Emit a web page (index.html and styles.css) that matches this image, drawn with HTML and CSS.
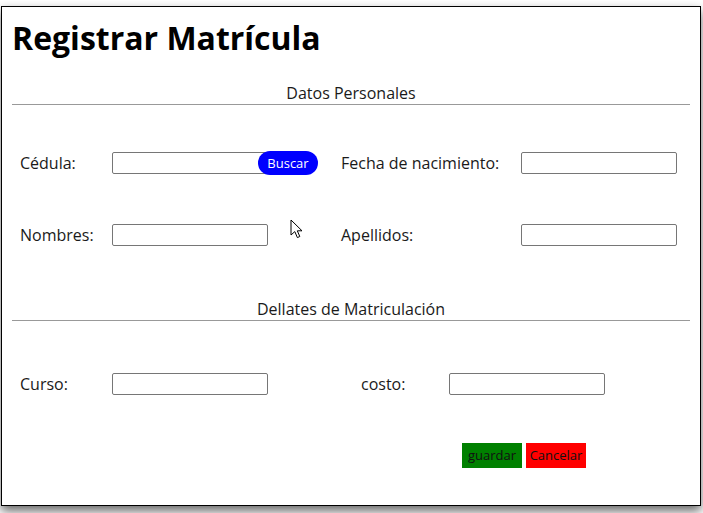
FILE: index.html
```html
<!DOCTYPE html>
<html lang="es">
<head>
<meta charset="utf-8">
<title>Registrar Matrícula</title>
<link rel="stylesheet" href="styles.css">
</head>
<body>
<div class="card">
  <h1 class="title">Registrar Matrícula</h1>

  <div class="section-title">Datos Personales</div>

  <div class="row row-a">
    <label class="lbl lbl-1">Cédula:</label>
    <div class="group group-a">
      <input class="field" type="text">
      <button class="btn-buscar" type="button">Buscar</button>
    </div>
    <label class="lbl lbl-2">Fecha de nacimiento:</label>
    <input class="field" type="text">
  </div>

  <div class="row row-a row-2">
    <label class="lbl lbl-1">Nombres:</label>
    <div class="group group-a">
      <input class="field" type="text">
    </div>
    <label class="lbl lbl-2">Apellidos:</label>
    <input class="field" type="text">
  </div>

  <div class="section-title section-2">Dellates de Matriculación</div>

  <div class="row row-3">
    <label class="lbl lbl-1">Curso:</label>
    <div class="group group-b">
      <input class="field" type="text">
    </div>
    <label class="lbl lbl-3">costo:</label>
    <input class="field" type="text">
  </div>

  <div class="actions">
    <button class="btn btn-save" type="button">guardar</button>
    <button class="btn btn-cancel" type="button">Cancelar</button>
  </div>
</div>

<svg class="cursor" width="14" height="21" viewBox="0 0 14 21" aria-hidden="true">
  <path d="M1 1 L1 16 L4.8 12.6 L7.4 18.6 L9.8 17.5 L7.3 11.8 L12 11.8 Z" fill="#fff" stroke="#000" stroke-width="1" stroke-linejoin="round"/>
</svg>
</body>
</html>
```

FILE: styles.css
```css
html, body {
  margin: 0;
  padding: 0;
  background: #fff;
}

body {
  font-family: "Open Sans", "Noto Sans", sans-serif;
  color: #111;
  position: relative;
  padding: 6px 0 0 1px;
  height: 513px;
  box-sizing: border-box;
  overflow: hidden;
}

.card {
  width: 700px;
  height: 500px;
  box-sizing: border-box;
  border: 1px solid #000;
  background: #fff;
  padding: 11px 10px 0 10px;
  box-shadow: 0 5px 10px rgba(0, 0, 0, 0.6);
}

.title {
  margin: 0;
  font-size: 32px;
  line-height: 40px;
  font-weight: 700;
  color: #000;
}

.section-title {
  margin-top: 24px;
  font-size: 16px;
  line-height: 22px;
  text-align: center;
  color: #1a1a1a;
  border-bottom: 1px solid #999;
}

.section-2 {
  margin-top: 52px;
}

.row {
  display: flex;
  align-items: center;
  height: 22px;
  padding-left: 8px;
}

.row-a {
  margin-top: 47px;
}

.row-2 {
  margin-top: 50px;
}

.row-3 {
  margin-top: 52px;
}

.lbl {
  font-size: 16px;
  line-height: 22px;
  color: #1a1a1a;
}

.lbl-1 { width: 92px; }
.lbl-2 { width: 180px; }
.lbl-3 { width: 88px; }

.group {
  display: flex;
  align-items: center;
}

.group-a { width: 229px; }
.group-b { width: 249px; }

.field {
  width: 156px;
  height: 22px;
  box-sizing: border-box;
  margin: 0;
  padding: 0 2px;
  border: 1px solid #767676;
  border-radius: 2px;
  background: #fff;
  font-family: inherit;
  font-size: 13px;
}

.btn-buscar {
  margin-left: -10px;
  width: 60px;
  height: 24px;
  padding: 0;
  border: none;
  border-radius: 12px;
  background: #0000ff;
  color: #fff;
  font-family: "Open Sans", "Noto Sans", sans-serif;
  font-size: 13px;
  line-height: 24px;
}

.actions {
  display: flex;
  gap: 4px;
  margin-top: 48px;
  padding-left: 450px;
}

.btn {
  width: 60px;
  height: 25px;
  padding: 0;
  border: none;
  border-radius: 0;
  font-family: "Open Sans", "Noto Sans", sans-serif;
  font-size: 13px;
  line-height: 25px;
  color: #111;
}

.btn-save { background: #008000; }
.btn-cancel { background: #ff0000; }

.cursor {
  position: absolute;
  left: 290px;
  top: 219px;
}
```
